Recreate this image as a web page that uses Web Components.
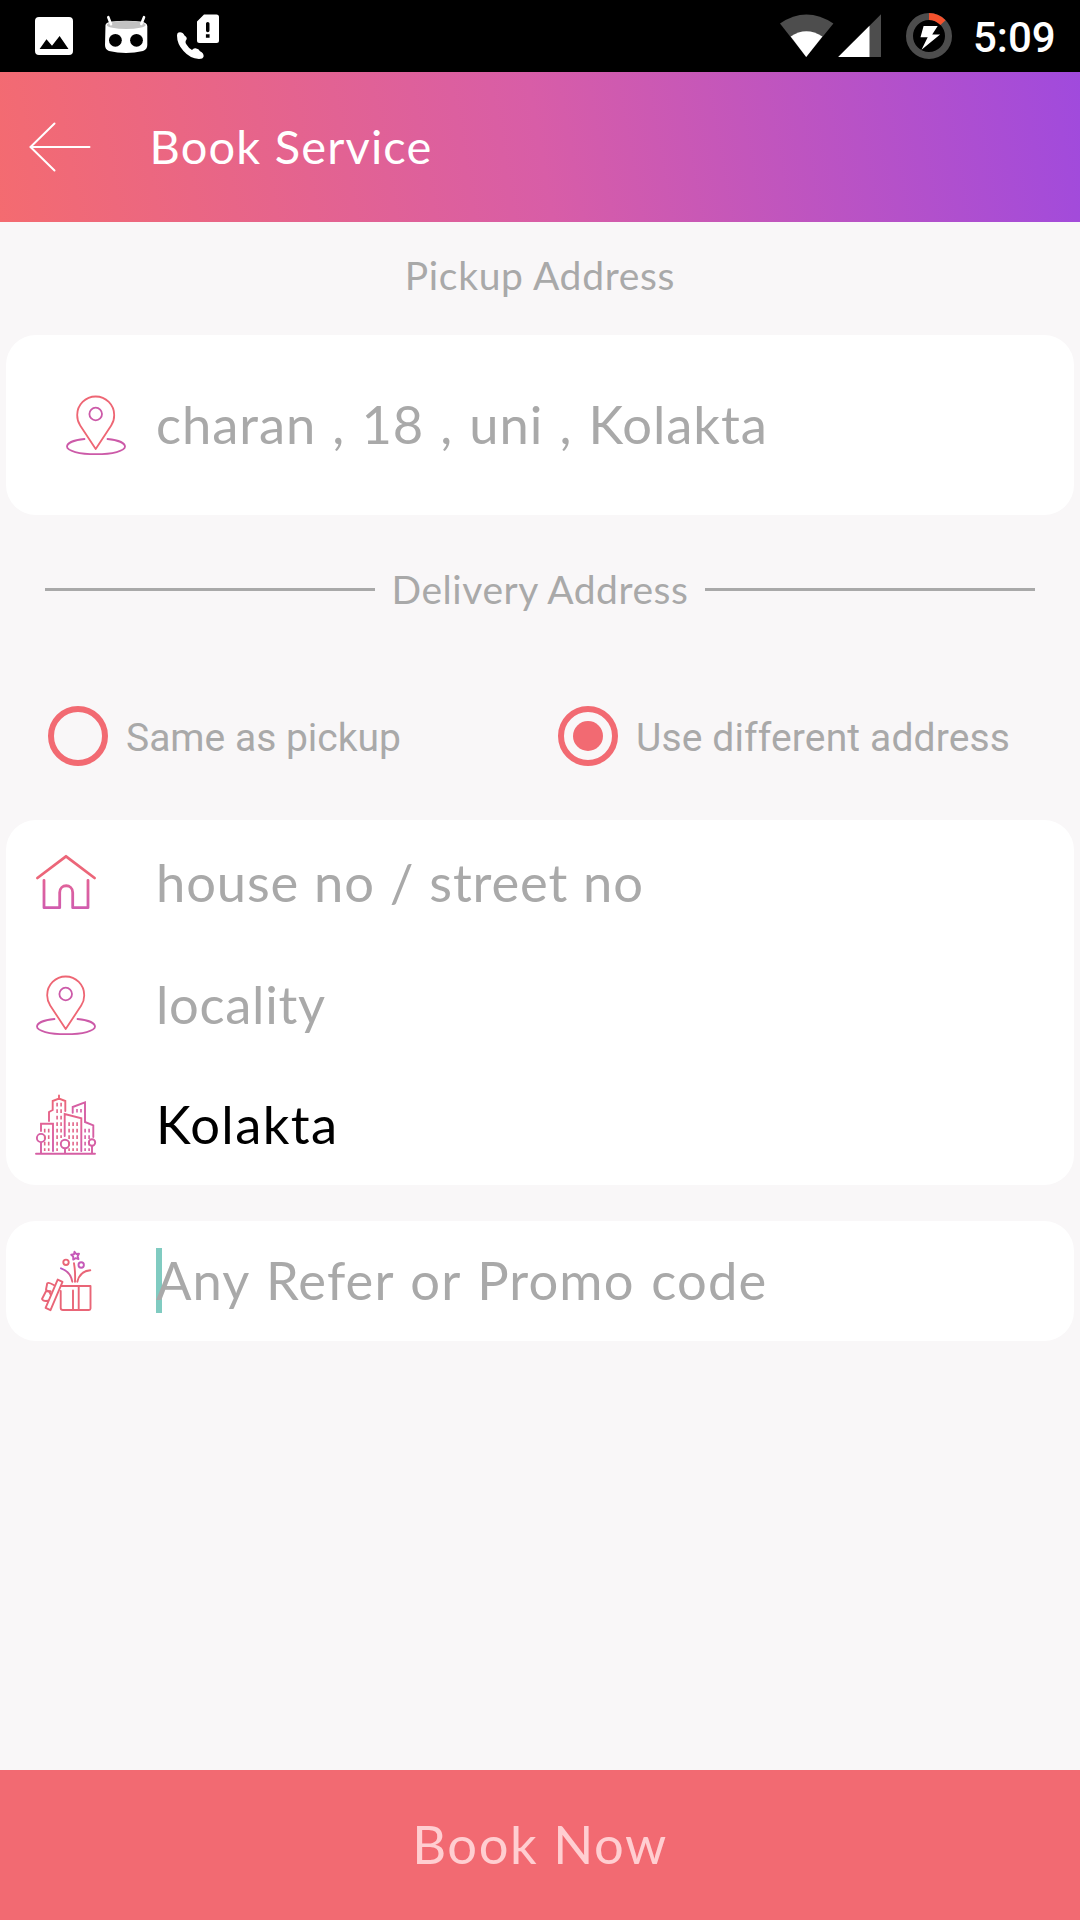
<!DOCTYPE html>
<html lang="en">
<head>
<meta charset="utf-8">
<title>Book Service</title>
<style>
html,body{margin:0;height:100%}
body{font-family:Lato,"Open Sans",sans-serif;color:#a9a9a9}
</style>
</head>
<body>
<booking-screen></booking-screen>
<script>
const define=(name,html)=>{
  const t=document.createElement('template');t.innerHTML=html;
  customElements.define(name,class extends HTMLElement{
    constructor(){super();this.attachShadow({mode:'open'}).append(t.content.cloneNode(true));}
  });
};

define('status-bar',`<style>
:host{display:flex;justify-content:space-between;height:72px;background:#000}
.right{display:flex;align-items:center}
svg{display:block}
.time{font:500 42px/72px Roboto,sans-serif;color:#fff;padding-top:3px;margin-left:-3px;width:107px;box-sizing:border-box;white-space:nowrap}
</style>
<svg width="240" height="72" viewBox="0 0 240 72" fill="#fff">
<path fill-rule="evenodd" d="M39 17H69Q73 17 73 21V51Q73 55 69 55H39Q35 55 35 51V21Q35 17 39 17ZM39.6 49H68.5L59.6 36L52 45.7L46.5 39.3Z"/>
<path d="M105.5 25Q106 22 112 21.5Q126 20 140 21.5Q147 22 147.3 26V45Q147.3 49.500 143 51Q126 55 109 51Q105 49.500 105 45Z"/>
<ellipse cx="126.200" cy="25" rx="19.500" ry="4" fill="#c2c2c2"/>
<path d="M108.300 17.200L111 24.200M144 17.200L141.300 24" stroke="#fff" stroke-width="2.600" stroke-linecap="round"/>
<circle cx="115.400" cy="40.300" r="6.400" fill="#000"/><circle cx="136.500" cy="40.300" r="6.400" fill="#000"/>
<path d="M178.500 32.500Q182.500 31.500 184.500 35.500Q187.500 37.500 186.500 39.500Q184.500 42 186.500 44.500Q188.500 48 192 50Q193.500 48 195.500 48.300Q199 49 200 51.200Q204 53 203.600 56.500Q203 59 199 59Q190 58.500 183.500 51Q177 44 177 35.500Q177 33.200 178.500 32.500Z"/>
<path fill-rule="evenodd" d="M204 14.400H216.500Q219 14.400 219 17V40.500Q219 43 216.500 43H199.500Q197 43 197 40.500V21.500ZM206 23.500V30.500Q206 32.300 207.700 32.300Q209.500 32.300 209.500 30.500V23.500Q209.500 22 207.700 22Q206 22 206 23.500ZM205.900 34.200V37.800H209.600V34.200Z"/>
</svg>
<div class="right">
<svg width="200" height="72" viewBox="776 0 200 72">
<path d="M806.200 57L780 23.500Q806.200 5.500 833.400 23.500Z" fill="#4d4d4d"/>
<path d="M806.200 57L790.700 36.500Q806.200 25.800 822.400 36.500Z" fill="#fff"/>
<path d="M838.200 57L881 14.300V57Z" fill="#4d4d4d"/><path d="M838.200 57L869.500 25.700V57Z" fill="#fff"/>
<circle cx="929" cy="36" r="19.500" fill="none" stroke="#4d4d4d" stroke-width="7"/>
<path d="M929 16.500A19.500 19.500 0 0 1 943 22.700" fill="none" stroke="#f4512c" stroke-width="7"/>
<path d="M923.600 26H937.700L932.200 34.500H940.100L921.500 49.700L927.700 37.300H920.500Z" fill="#fff"/>
</svg>
<span class="time"><slot></slot></span></div>`);

define('app-bar',`<style>
:host{display:flex;align-items:center;height:150px;color:#fff;background:linear-gradient(80deg,#f46b70 0%,#d85da7 50%,#a04add 100%)}
svg{display:block;flex:none}
.t{font-size:47px;line-height:60px;margin-left:49.500px;padding-bottom:3px;letter-spacing:var(--ls,0);white-space:nowrap}
</style>
<svg width="100" height="60" viewBox="0 117 100 60" fill="none" stroke="#fff" stroke-width="2" stroke-linecap="round"><path d="M30.500 147H89.500M54.500 123.500L30.500 147L54.500 170.500"/></svg>
<div class="t"><slot></slot></div>`);

define('section-title',`<style>
:host{display:flex;align-items:center;justify-content:center;font-size:39px;line-height:48px;letter-spacing:var(--ls,0);white-space:nowrap}
:host([ruled]){padding:0 45px;justify-content:space-between}
i{display:none;width:330px;height:3px;margin-bottom:1px;background:#a9a9a9}
:host([ruled]) i{display:block}
.t{padding-bottom:2px}
</style><i></i><div class="t"><slot></slot></div><i></i>`);

define('form-card',`<style>
:host{display:block;margin:0 6px;background:#fff;border-radius:30px}
</style><slot></slot>`);

define('form-row',`<style>
:host{display:flex;align-items:center;height:var(--h,120px);padding-left:30px;font-size:52.500px;line-height:64px;white-space:nowrap}
::slotted(line-icon){flex:none}
.t{position:relative;padding-top:var(--drop,0px);padding-bottom:var(--lift,3px);margin-left:var(--gap,60px);letter-spacing:var(--ls,0);word-spacing:var(--ws,0)}
:host([inset]){padding-left:60px}
:host([filled]) .t{color:#000}
.caret{display:none;position:absolute;left:0;top:0;width:6px;height:65px;background:#80cbc1}
:host([focused]) .caret{display:block}
.v{position:relative}
</style><slot name="icon"></slot><div class="t"><span class="caret"></span><span class="v"><slot></slot></span></div>`);

define('radio-option',`<style>
:host{display:flex;align-items:center;gap:18px;font:39px/48px Roboto,sans-serif;white-space:nowrap;letter-spacing:var(--ls,0)}
.r{box-sizing:border-box;width:60px;height:60px;border:6px solid #f26a72;border-radius:50%;display:flex;align-items:center;justify-content:center;flex:none}
:host([checked]) .r::after{content:"";width:30px;height:30px;border-radius:50%;background:#f26a72}
.t{padding-top:4px}
</style><span class="r"></span><span class="t"><slot></slot></span>`);

define('primary-button',`<style>
:host{display:flex;align-items:center;justify-content:center;height:150px;background:#f26a72;color:#ffced1;font-size:52.500px;line-height:64px;letter-spacing:var(--ls,0)}
div{padding-bottom:3px}
</style><div><slot></slot></div>`);

const icons={
pin:`<g stroke-width="1.800"><path stroke="#ee6674" d="M29.700 54L14.200 30.500A18.500 18.500 0 0 1 11.200 20A18.500 18.500 0 0 1 48.200 20A18.500 18.500 0 0 1 45.200 30.500Z"/><circle cx="29.700" cy="19" r="6.300" stroke="#cc5aa8"/><path stroke="#cc5aa8" d="M18.500 44C8 45 1 48 1 51.600C1 56 13.500 59.200 30 59.200S59 56 59 51.600C59 48 52 45 41.500 44"/></g>`,
home:`<g stroke-width="2.800"><path stroke="#ec6679" d="M1.400 27L30 5.300L58.600 27"/><path stroke="url(#g)" d="M8 29.300V56.700H23.700V41.500C23.700 32.500 36.700 32.500 36.700 41.500V56.700H52V29.300"/></g>`,
city:`<g stroke-width="1.900" stroke="url(#g)" stroke-linejoin="miter"><path d="M23 .5V4M13 26V17L16.700 15V6L23 3.500L29.300 6V16M5 36V28.700H17V56M28.700 41V19L45.300 23.300V56"/><path stroke="#d65fa4" d="M36.700 17.700V12L49 7.300V27L57.300 30.300V42M0 58.700H59M5 48V58M29 54V58M56 51V58"/><g stroke="#d65fa4"><circle cx="5" cy="43" r="4.100"/><circle cx="29" cy="49" r="4.200"/><circle cx="56" cy="47.500" r="3.200"/></g><g stroke-dasharray="3.600 2.900" stroke-width="1.600" stroke-linecap="butt"><path stroke="#e26489" d="M21.100 7.800V56M25.100 7.800V43M8.700 33.800V56M12.700 33.800V56M33.100 27.300V56M37.100 27.300V56M41.100 27.300V56"/><path stroke="#d65fa4" d="M41 14V18M45 14V18M49.100 33.800V56M53.100 33.800V56"/></g></g>`,
gift:`<g stroke-width="1.900" stroke="#e96577"><path d="M25 35H54.500V57.500Q54.500 59 53 59H27Q24.700 59 24.700 57V40M37 39.500V59M42.700 35V59"/><path d="M21.700 28.600L26.500 30.800L14.500 59.200L9.600 56.800ZM17.700 34Q11 30 11 33.500L10 38.500Q10.500 40 14.500 40.300M10 40.200L6 48Q7 50.500 11.800 49.800M10 40Q14 40 14.300 43"/><path stroke="url(#gg)" d="M25 17.300Q34.500 20.500 36.300 30.700"/><path d="M38 12.300Q39.500 21 39 30.700M41.300 30.700Q44 20 54.300 19.300"/><circle cx="30" cy="11.300" r="2.700"/><g stroke="#c659b8"><circle cx="45.200" cy="14" r="2.700"/><path d="M38.500 .7L40.200 3L43 2.800L41.600 5.300L42.500 8L39.700 7.200L37.200 8.600L37.200 5.600L35.200 3.700L38 3.200Z"/></g></g>`};
customElements.define('line-icon',class extends HTMLElement{
  constructor(){super();this.attachShadow({mode:'open'});}
  connectedCallback(){
    this.shadowRoot.innerHTML=`<style>:host{display:block;width:60px;height:60px}svg{display:block;overflow:visible}</style>
<svg width="60" height="60" viewBox="0 0 60 60" fill="none" stroke-linecap="round" stroke-linejoin="round"><defs>
<linearGradient id="g" gradientUnits="userSpaceOnUse" x1="30" y1="5" x2="30" y2="60"><stop offset="0" stop-color="#ec6679"/><stop offset=".5" stop-color="#e0629a"/><stop offset="1" stop-color="#cf5bb0"/></linearGradient>
<linearGradient id="gg" gradientUnits="userSpaceOnUse" x1="25" y1="17" x2="37" y2="31"><stop offset="0" stop-color="#b555c8"/><stop offset="1" stop-color="#e96577"/></linearGradient></defs>${icons[this.getAttribute('name')]}</svg>`;
  }
});

define('booking-screen',`<style>
:host{display:flex;flex-direction:column;width:1080px;height:1920px;background:#f9f7f8;overflow:hidden}
.radios{display:flex;height:60px;padding-left:48px;margin:92px 0 54px}
.radios radio-option:first-child{width:510px}
primary-button{margin-top:auto}
</style>
<status-bar>5:09</status-bar>
<app-bar style="--ls:1.18px">Book Service</app-bar>
<section-title style="height:107px;margin-bottom:6px;--ls:.68px">Pickup Address</section-title>
<form-card><form-row inset style="--h:180px;--gap:30px;--ls:.95px;--ws:1.750px"><line-icon slot="icon" name="pin"></line-icon>charan , 18 , uni , Kolakta</form-row></form-card>
<section-title ruled style="height:48px;margin-top:51px;--ls:.55px">Delivery Address</section-title>
<div class="radios"><radio-option>Same as pickup</radio-option><radio-option checked style="--ls:.14px">Use different address</radio-option></div>
<form-card>
<form-row style="--h:122px;--lift:0px;--drop:2px;--ls:.85px;--ws:.7px"><line-icon slot="icon" name="home"></line-icon>house no / street no</form-row>
<form-row style="--h:123px;--lift:0px;--ls:.7px"><line-icon slot="icon" name="pin" style="margin-top:3px"></line-icon>locality</form-row>
<form-row filled style="--ls:1.400px"><line-icon slot="icon" name="city"></line-icon>Kolakta</form-row>
</form-card>
<form-card style="margin-top:36px"><form-row focused style="--ls:1.130px;--ws:2.200px"><line-icon slot="icon" name="gift"></line-icon>Any Refer or Promo code</form-row></form-card>
<primary-button style="--ls:1.550px">Book Now</primary-button>`);
</script>
</body>
</html>
